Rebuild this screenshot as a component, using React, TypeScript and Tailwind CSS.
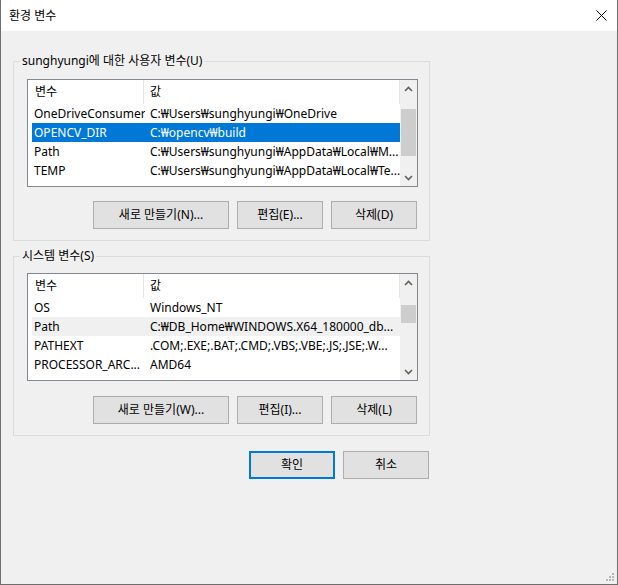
import React from "react";

type Row = { name: string; value: string; state?: "selected" | "inactive" };

const userVars: Row[] = [
  { name: "OneDriveConsumer", value: "C:₩Users₩sunghyungi₩OneDrive" },
  { name: "OPENCV_DIR", value: "C:₩opencv₩build", state: "selected" },
  { name: "Path", value: "C:₩Users₩sunghyungi₩AppData₩Local₩M..." },
  { name: "TEMP", value: "C:₩Users₩sunghyungi₩AppData₩Local₩Te..." },
];

const systemVars: Row[] = [
  { name: "OS", value: "Windows_NT" },
  { name: "Path", value: "C:₩DB_Home₩WINDOWS.X64_180000_db...", state: "inactive" },
  { name: "PATHEXT", value: ".COM;.EXE;.BAT;.CMD;.VBS;.VBE;.JS;.JSE;.W..." },
  { name: "PROCESSOR_ARC...", value: "AMD64" },
];

function Chevron({ up }: { up?: boolean }) {
  return (
    <svg width="9" height="6" viewBox="0 0 9 6">
      <path
        d={up ? "M1 5 L4.5 1.5 L8 5" : "M1 1 L4.5 4.5 L8 1"}
        fill="none"
        stroke="#606060"
        strokeWidth="1.6"
      />
    </svg>
  );
}

function VarList({ rows, thumbTop, thumbHeight }: { rows: Row[]; thumbTop: string; thumbHeight: string }) {
  return (
    <div className="ml-[13px] flex h-[108px] w-[391px] overflow-hidden border border-[#828790] bg-white">
      <div className="flex-1 overflow-hidden pl-[4px]">
        <div className="flex h-[24px] items-center">
          <div className="h-full w-[112px] border-r border-[#e5e5e5] pl-[3px] leading-[24px]">변수</div>
          <div className="h-full flex-1 border-r border-[#e5e5e5] pl-[6px] leading-[24px]">값</div>
        </div>
        {rows.map((r) => (
          <div
            key={r.name}
            className={
              "flex h-[19px] leading-[19px] whitespace-nowrap " +
              (r.state === "selected"
                ? "bg-[#0078d7] text-white"
                : r.state === "inactive"
                  ? "bg-[#f0f0f0]"
                  : "")
            }
          >
            <div className="w-[113px] overflow-hidden pl-[2px]">{r.name}</div>
            <div className="flex-1 overflow-hidden pl-[5px]">{r.value}</div>
          </div>
        ))}
      </div>
      <div className="flex w-[17px] flex-col bg-[#f0f0f0]">
        <div className="flex h-[17px] items-center justify-center">
          <Chevron up />
        </div>
        <div className="relative flex-1">
          <div className={"absolute left-[1px] right-[1px] bg-[#cdcdcd] " + thumbTop + " " + thumbHeight} />
        </div>
        <div className="flex h-[17px] items-center justify-center">
          <Chevron />
        </div>
      </div>
    </div>
  );
}

function WinButton({ children, className, focused }: { children: React.ReactNode; className: string; focused?: boolean }) {
  return (
    <button
      className={
        "flex h-[28px] items-center justify-center bg-[#e1e1e1] text-black " +
        (focused ? "border-2 border-[#0078d7] " : "border border-[#adadad] ") +
        className
      }
    >
      {children}
    </button>
  );
}

function GroupBox({ label, children, listGap }: { label: string; children: React.ReactNode; listGap: string }) {
  return (
    <fieldset className="w-[417px] border border-[#dcdcdc] pb-[11px]">
      <legend className="ml-[6px] px-[2px] leading-[16px]">{label}</legend>
      <div className={listGap}>{children}</div>
    </fieldset>
  );
}

export default function App() {
  return (
    <div className="flex h-[585px] w-[618px] flex-col border-x border-b border-[#6e6e6e] bg-[#f0f0f0] font-['Noto_Sans','Noto_Sans_CJK_KR',sans-serif] text-[12px] text-black">
      <div className="flex h-[31px] shrink-0 items-center justify-between bg-white pl-[8px] pr-[10px]">
        <span>환경 변수</span>
        <svg width="11" height="11" viewBox="0 0 11 11">
          <path d="M0.5 0.5 L10.5 10.5 M10.5 0.5 L0.5 10.5" stroke="#000" strokeWidth="1" />
        </svg>
      </div>
      <div className="relative flex flex-1 flex-col pl-[12px] pt-[22px]">
        <GroupBox label="sunghyungi에 대한 사용자 변수(U)" listGap="pt-[10px]">
          <VarList rows={userVars} thumbTop="top-[12px]" thumbHeight="h-[47px]" />
          <div className="ml-[13px] mt-[14px] flex w-[390px] justify-end gap-[8px]">
            <WinButton className="w-[136px]">새로 만들기(N)...</WinButton>
            <WinButton className="w-[86px]">편집(E)...</WinButton>
            <WinButton className="w-[86px]">삭제(D)</WinButton>
          </div>
        </GroupBox>
        <div className="mt-[7px]">
          <GroupBox label="시스템 변수(S)" listGap="pt-[9px]">
            <VarList rows={systemVars} thumbTop="top-[14px]" thumbHeight="h-[18px]" />
            <div className="ml-[13px] mt-[15px] flex w-[390px] justify-end gap-[8px]">
              <WinButton className="w-[136px]">새로 만들기(W)...</WinButton>
              <WinButton className="w-[86px]">편집(I)...</WinButton>
              <WinButton className="w-[86px]">삭제(L)</WinButton>
            </div>
          </GroupBox>
        </div>
        <div className="mt-[15px] flex w-[416px] justify-end gap-[8px]">
          <WinButton className="w-[86px]" focused>
            확인
          </WinButton>
          <WinButton className="w-[86px]">취소</WinButton>
        </div>
        <svg className="absolute bottom-[3px] right-[3px]" width="8" height="8" viewBox="0 0 8 8">
          <rect x="6" y="0" width="2" height="2" fill="#b8b8b8" />
          <rect x="3" y="3" width="2" height="2" fill="#b8b8b8" />
          <rect x="6" y="3" width="2" height="2" fill="#b8b8b8" />
          <rect x="0" y="6" width="2" height="2" fill="#b8b8b8" />
          <rect x="3" y="6" width="2" height="2" fill="#b8b8b8" />
          <rect x="6" y="6" width="2" height="2" fill="#b8b8b8" />
        </svg>
      </div>
    </div>
  );
}
